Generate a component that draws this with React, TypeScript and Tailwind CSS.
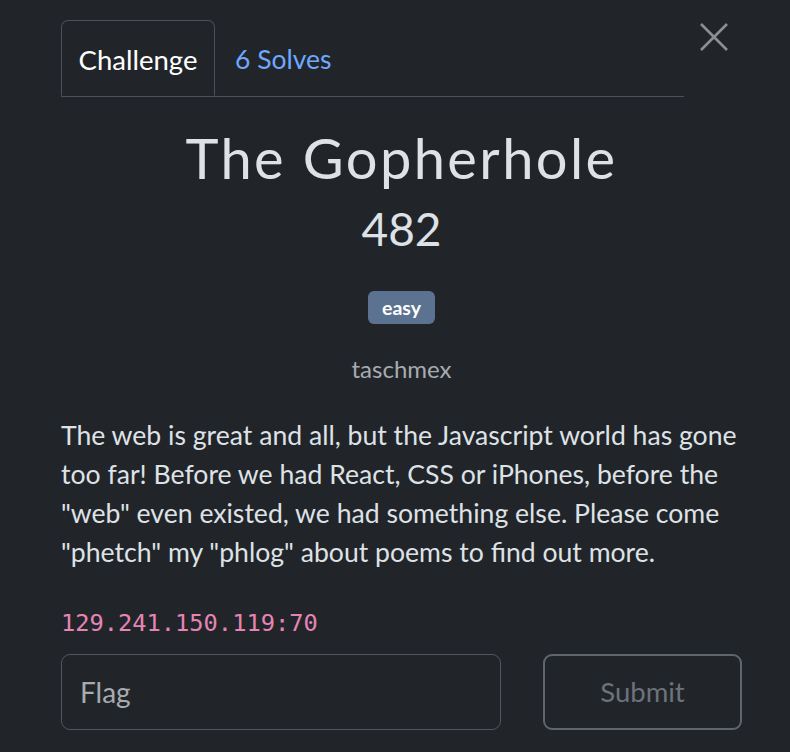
const CloseIcon = () => (
  <svg width="28" height="28" viewBox="0 0 28 28" fill="none" stroke="#8b8e92" strokeWidth="2.6" strokeLinecap="butt">
    <path d="M1 1 L27 27 M27 1 L1 27" />
  </svg>
);

const App = () => {
  return (
    <div className="min-h-[752px] w-full bg-[#212529] font-['Lato','Noto_Sans',sans-serif] text-[#dee2e6]">
      <div className="pl-[61px] pr-[48px] pt-[20px]">
        <div className="flex items-start">
          <div className="flex w-[623px] border-b border-[#4b5158]">
            <div className="-mb-px flex h-[76px] w-[154px] items-center justify-center rounded-t-[7px] border border-b-transparent border-[#4b5158] bg-[#212529] pt-[3px] text-[27.5px] text-white">
              Challenge
            </div>
            <div className="flex h-[76px] items-center px-[20px] pt-[3px] text-[26.5px] text-[#6ea8fe]">6 Solves</div>
          </div>
          <button className="ml-[16px] mt-[3px]">
            <CloseIcon />
          </button>
        </div>

        <div className="flex flex-col items-center">
          <h1 className="mt-[27px] text-[56px] font-normal leading-[67px] tracking-[2.4px] text-[#dee2e6]">
            The Gopherhole
          </h1>
          <div className="mt-[9px] text-[46px] font-normal leading-[58px]">482</div>
          <span className="mt-[33px] rounded-[6px] bg-[#5b7291] px-[14px] text-[19.5px] font-bold leading-[33px] text-white">
            easy
          </span>
          <div className="mt-[27px] text-[24px] leading-[36px] text-[#a7abb0]">taschmex</div>
        </div>

        <p className="mt-[29px] text-[26.6px] leading-[39px] text-[#dee2e6]">
          The web is great and all, but the Javascript world has gone too far! Before we had React, CSS or iPhones,
          before the "web" even existed, we had something else. Please come "phetch" my "phlog" about poems to find
          out more.
        </p>

        <code className="mt-[33px] block font-['DejaVu_Sans_Mono',monospace] text-[23.7px] leading-[36px] text-[#e685b5]">
          129.241.150.119:70
        </code>

        <div className="mt-[13px] flex items-center justify-between">
          <input
            placeholder="Flag"
            className="h-[76px] w-[440px] rounded-[9px] border border-[#50565d] bg-transparent px-[18px] text-[28px] text-[#dee2e6] outline-none placeholder:text-[#a7abb0]"
          />
          <button className="h-[76px] w-[199px] rounded-[9px] border-2 border-[#5f666e] text-[27.5px] text-[#6c737b]">
            Submit
          </button>
        </div>
      </div>
    </div>
  );
};

export default App;
